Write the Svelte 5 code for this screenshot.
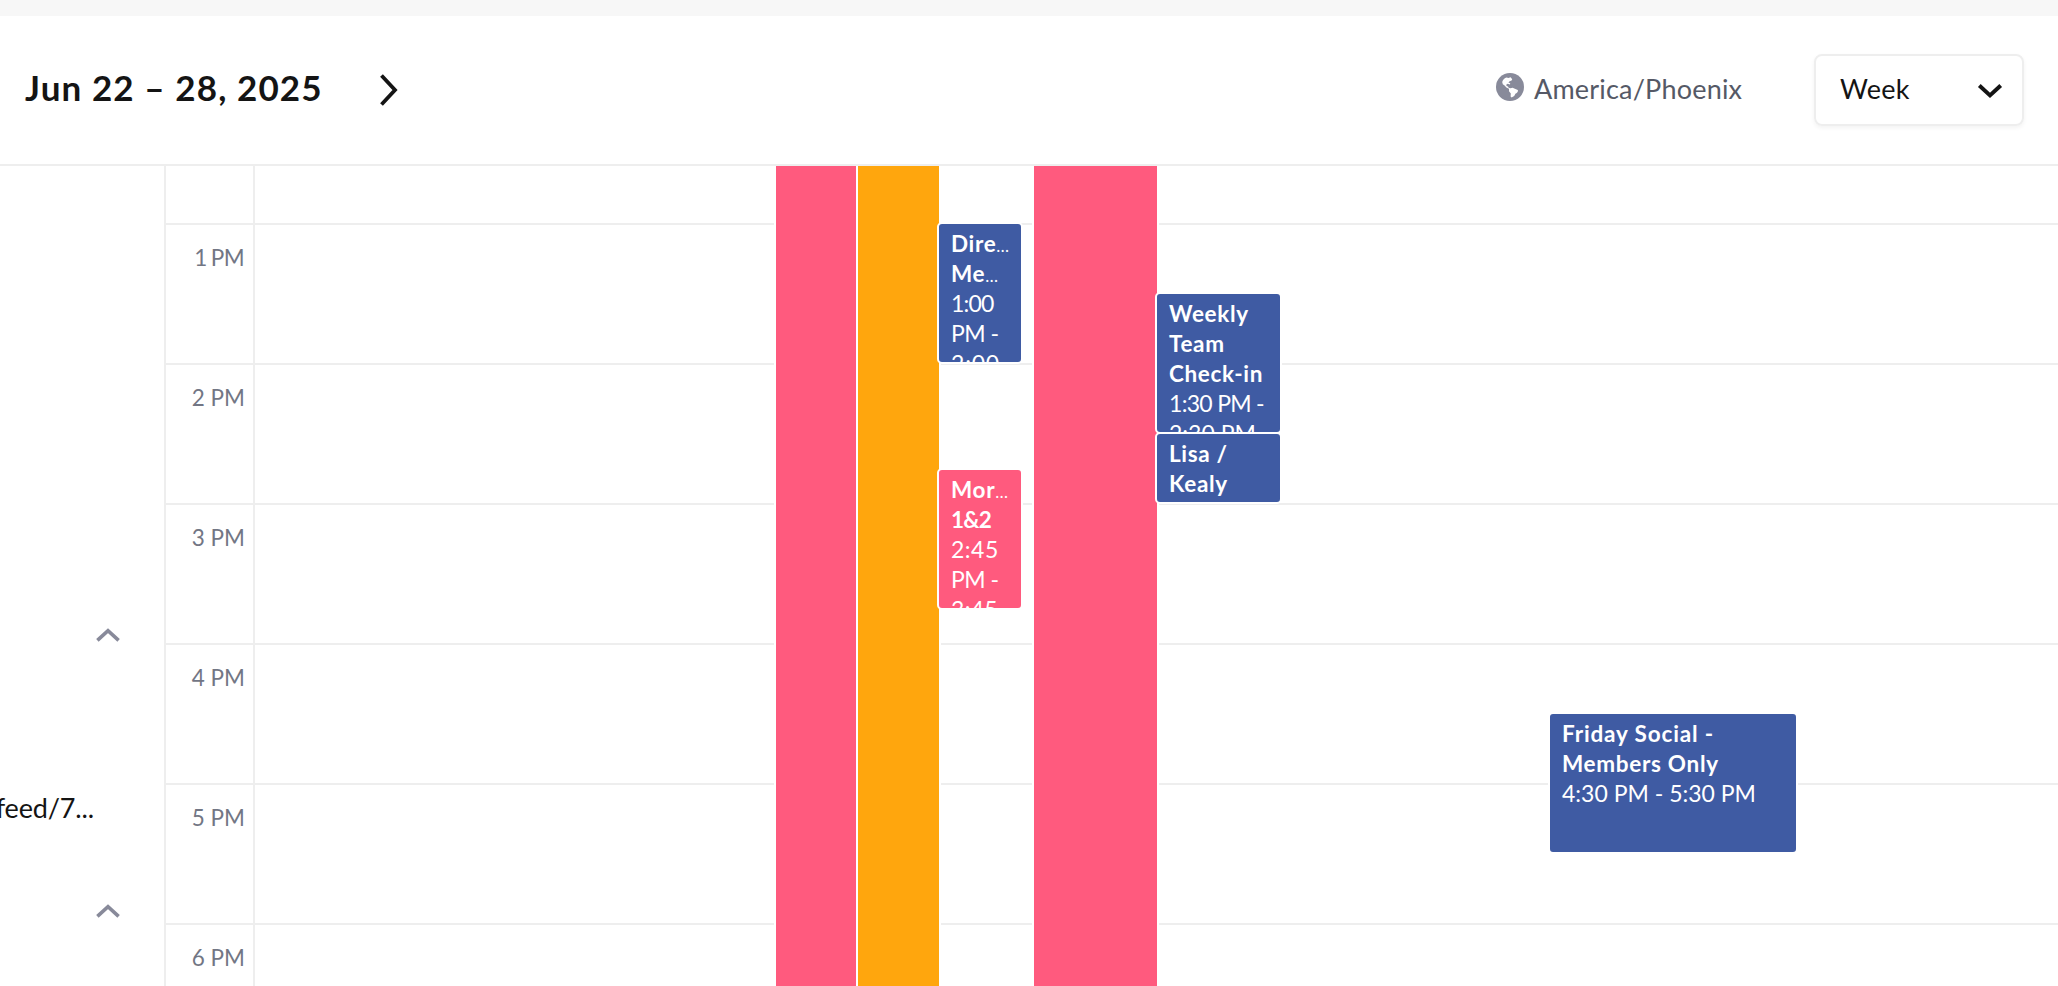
<script lang="ts">
  interface Line {
    text: string;
    kind: 'title' | 'time';
    cut?: boolean;
    spacing?: number;
  }

  interface CalendarEvent {
    id: string;
    color: string;
    left: number;
    width: number;
    top: number;
    height: number;
    lines: Line[];
  }

  interface Day {
    name: string;
    events: CalendarEvent[];
  }

  const PINK = '#ff5a7e';
  const ORANGE = '#ffa60d';
  const BLUE = '#3f5ba3';

  // letter spacing defaults per line kind, in px
  const SPACING = { title: 0.65, time: 0 };

  const hours = ['1 PM', '2 PM', '3 PM', '4 PM', '5 PM', '6 PM'];

  const days: Day[] = [
    { name: 'sun', events: [] },
    { name: 'mon', events: [] },
    {
      name: 'tue',
      events: [
        { id: 'tue-a', color: PINK, left: 0, width: 84, top: -10, height: 850, lines: [] },
        { id: 'tue-b', color: ORANGE, left: 82, width: 85, top: -10, height: 850, lines: [] },
        {
          id: 'directors', color: BLUE, left: 163, width: 86, top: 56, height: 142,
          lines: [
            { text: 'Dire', kind: 'title', cut: true },
            { text: 'Me', kind: 'title', cut: true },
            { text: '1:00', kind: 'time', spacing: -0.8 },
            { text: 'PM -', kind: 'time', spacing: -0.5 },
            { text: '2:00', kind: 'time', spacing: 0.8 },
          ],
        },
        {
          id: 'morning', color: PINK, left: 163, width: 86, top: 302, height: 142,
          lines: [
            { text: 'Mor', kind: 'title', cut: true },
            { text: '1&2', kind: 'title', spacing: -0.8 },
            { text: '2:45', kind: 'time', spacing: 0.5 },
            { text: 'PM -', kind: 'time', spacing: -0.5 },
            { text: '3:45', kind: 'time', spacing: 0.3 },
          ],
        },
      ],
    },
    {
      name: 'wed',
      events: [
        { id: 'wed-a', color: PINK, left: 0, width: 127, top: -10, height: 850, lines: [] },
        {
          id: 'checkin', color: BLUE, left: 123, width: 127, top: 126, height: 142,
          lines: [
            { text: 'Weekly', kind: 'title' },
            { text: 'Team', kind: 'title' },
            { text: 'Check-in', kind: 'title' },
            { text: '1:30 PM -', kind: 'time', spacing: -0.7 },
            { text: '2:30 PM', kind: 'time' },
          ],
        },
        {
          id: 'lisa', color: BLUE, left: 123, width: 127, top: 266, height: 72,
          lines: [
            { text: 'Lisa /', kind: 'title' },
            { text: 'Kealy', kind: 'title' },
          ],
        },
      ],
    },
    { name: 'thu', events: [] },
    {
      name: 'fri',
      events: [
        {
          id: 'social', color: BLUE, left: 0, width: 250, top: 546, height: 142,
          lines: [
            { text: 'Friday Social -', kind: 'title', spacing: 0.85 },
            { text: 'Members Only', kind: 'title', spacing: 0.7 },
            { text: '4:30 PM - 5:30 PM', kind: 'time' },
          ],
        },
      ],
    },
    { name: 'sat', events: [] },
  ];
</script>

<div class="page">
  <div class="topbar"></div>

  <header class="toolbar">
    <h1 class="range">Jun 22 – 28, 2025</h1>
    <button class="next" aria-label="Next week">
      <svg width="20" height="34" viewBox="0 0 20 34">
        <path d="M2.5 2.5 L16 17 L2.5 31.5" fill="none" stroke="#141414" stroke-width="3.8" />
      </svg>
    </button>
    <div class="zone">
      <svg width="28" height="28" viewBox="0 0 28 28">
        <circle cx="14" cy="14" r="14" fill="#888a9a" />
        <path
          d="M6.2 9 C7 6.6 8.6 5 10.6 4.6 L12.4 5 L14.6 4.2 L16.2 6.2 L15.6 7.6 L13.6 8.2 L12.4 9.4 L14.2 10.2 L14 11.4 L11.6 10.8 L10.2 11.8 L10.6 13 L12 13.4 L12.6 14.8 L14.4 15.2 L16.6 14.8 L21.8 17 C22.4 18.4 21.4 20 19.4 20.8 L18.2 23 L15.6 24.6 L14.6 23.6 L14.8 20.4 L13 18.2 L13 15.8 L10.4 14.4 L8.6 12.4 L6.8 11.2 Z"
          fill="#fff"
        />
      </svg>
      <span>America/Phoenix</span>
    </div>
    <button class="select">
      <span>Week</span>
      <svg width="26" height="16" viewBox="0 0 26 16">
        <path d="M2.3 2.5 L13 12.4 L23.7 2.5" fill="none" stroke="#141414" stroke-width="4" />
      </svg>
    </button>
  </header>

  <div class="body">
    <aside class="sidebar">
      <svg class="caret" width="24" height="14" viewBox="0 0 24 14">
        <path d="M1.4 12.3 L12 2.6 L22.6 12.3" fill="none" stroke="#888a9a" stroke-width="3.6" />
      </svg>
      <div class="feed"><span>feed/7...</span></div>
      <svg class="caret" width="24" height="14" viewBox="0 0 24 14">
        <path d="M1.4 12.3 L12 2.6 L22.6 12.3" fill="none" stroke="#888a9a" stroke-width="3.6" />
      </svg>
    </aside>

    <div class="axis">
      <div class="cell first"></div>
      {#each hours as hour}
        <div class="cell" class:narrow={hour.startsWith('1')}>{hour}</div>
      {/each}
    </div>

    <div class="days">
      {#each days as day (day.name)}
        <div class="day">
          {#each day.events as evt (evt.id)}
            <div
              class="event"
              style="left: {evt.left}px; top: {evt.top}px; width: {evt.width}px; height: {evt.height}px; background-color: {evt.color};"
            >
              {#each evt.lines as line}
                <div class={line.kind} style="letter-spacing: {line.spacing ?? SPACING[line.kind]}px;">
                  {line.text}{#if line.cut}<span class="dots">…</span>{/if}
                </div>
              {/each}
            </div>
          {/each}
        </div>
      {/each}
    </div>
  </div>
</div>

<style>
  :global(body) {
    margin: 0;
    overflow: hidden;
  }

  .page {
    display: flex;
    flex-direction: column;
    width: 2058px;
    height: 986px;
    overflow: hidden;
    background: #fff;
    color: #141414;
    font-family: Lato, 'Open Sans', sans-serif;
  }

  .topbar {
    flex: none;
    height: 16px;
    background: #f7f7f7;
  }

  .toolbar {
    box-sizing: border-box;
    flex: none;
    display: flex;
    align-items: center;
    height: 150px;
    padding: 0 34px 0 25px;
    border-bottom: 2px solid #eee;
  }

  .range {
    width: 354px;
    margin: 0;
    padding-bottom: 6px;
    font-size: 35px;
    font-weight: 700;
    line-height: 44px;
    letter-spacing: 1.1px;
    white-space: nowrap;
  }

  button {
    padding: 0;
    border: 0;
    background: none;
    color: inherit;
    font: inherit;
  }

  .next {
    display: flex;
  }

  .zone {
    display: flex;
    align-items: center;
    gap: 10px;
    margin-left: auto;
    width: 318px;
    color: #555966;
    font-size: 27px;
    line-height: 36px;
    letter-spacing: 0.2px;
  }

  .zone svg {
    flex: none;
    margin-bottom: 6px;
  }

  .zone span,
  .select span {
    padding-bottom: 3px;
  }

  .select {
    box-sizing: border-box;
    display: flex;
    align-items: center;
    justify-content: space-between;
    width: 210px;
    height: 72px;
    padding: 0 19px 0 24px;
    border: 2px solid #eee;
    border-radius: 8px;
    box-shadow: 0 2px 4px rgba(0, 0, 0, 0.05);
    font-size: 27px;
    line-height: 36px;
    letter-spacing: 0.3px;
  }

  .select svg {
    margin-top: 2px;
  }

  .body {
    flex: 1;
    display: flex;
    min-height: 0;
  }

  .sidebar {
    box-sizing: border-box;
    flex: none;
    display: flex;
    flex-direction: column;
    align-items: flex-end;
    width: 166px;
    padding: 462px 44px 0 0;
    border-right: 2px solid #eee;
  }

  .caret {
    display: block;
    flex: none;
  }

  .feed {
    display: flex;
    justify-content: flex-end;
    width: 96px;
    margin: 148px 26px 78px 0;
    overflow: hidden;
    font-size: 27px;
    line-height: 36px;
    letter-spacing: -0.15px;
    white-space: nowrap;
  }

  .axis {
    flex: none;
    width: 87px;
    border-right: 2px solid #eee;
  }

  .cell {
    box-sizing: border-box;
    height: 140px;
    padding: 18px 8px 0 0;
    border-bottom: 2px solid #eee;
    color: #727684;
    font-size: 22.5px;
    line-height: 30px;
    text-align: right;
  }

  .cell.first {
    height: 59px;
  }

  .cell.narrow {
    padding-right: 9px;
    word-spacing: -1px;
    letter-spacing: -0.6px;
  }

  .days {
    flex: 1;
    display: flex;
    min-width: 0;
    padding-left: 3px;
    overflow: hidden;
    background: repeating-linear-gradient(#fff 0 138px, #eee 138px 140px) 0 -81px / 100% 1400px;
  }

  .day {
    position: relative;
    flex: none;
    width: 258px;
  }

  .event {
    position: absolute;
    box-sizing: border-box;
    padding: 5px 0 0 12px;
    border: 2px solid #fff;
    border-radius: 5px;
    overflow: hidden;
    color: #fff;
    line-height: 30px;
    white-space: nowrap;
  }

  .title {
    height: 30px;
    font-size: 22.5px;
    font-weight: 700;
  }

  .time {
    height: 30px;
    margin-top: -1px;
    margin-bottom: 1px;
    font-size: 23px;
  }

  .dots {
    font-size: 17px;
    font-weight: 400;
    line-height: 1;
    letter-spacing: 0;
  }
</style>
